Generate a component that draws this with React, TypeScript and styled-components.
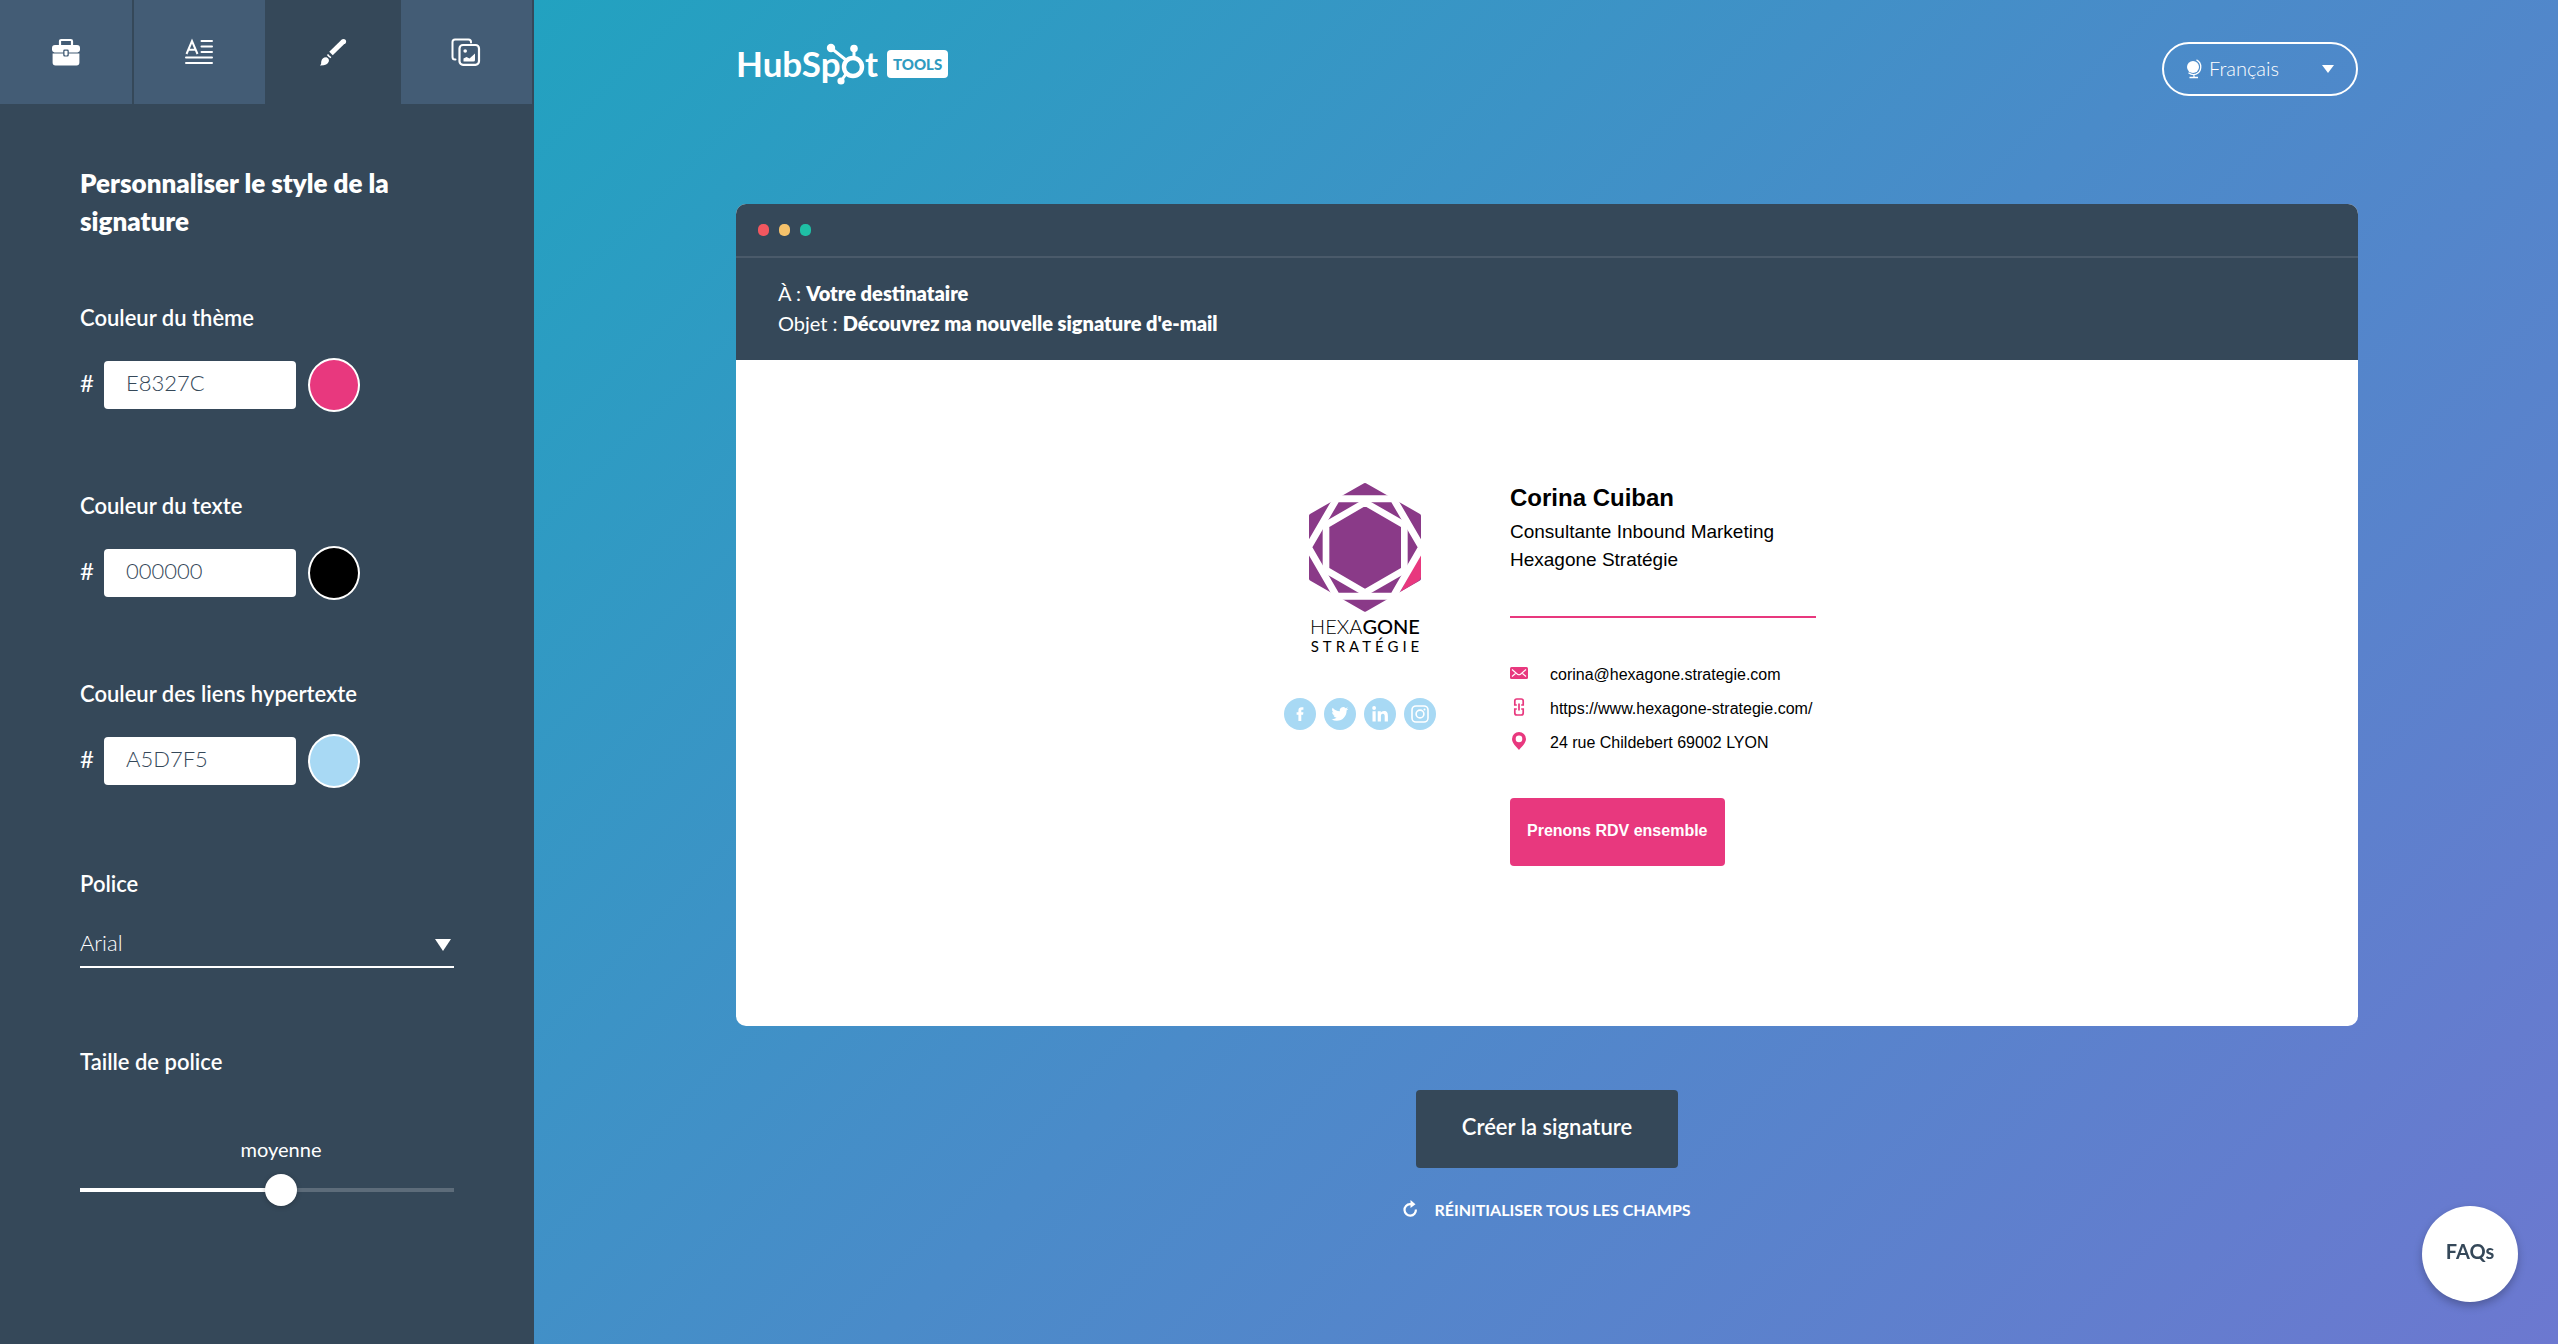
import React, { useState } from 'react';
import styled, { createGlobalStyle } from 'styled-components';

const slate = '#354859';
const slateLight = '#435c75';
const pink = '#e8387e';
const sky = '#a8d9f4';
const purple = '#8a3a88';
const ui = "Lato, 'Open Sans', sans-serif";
const arial = "'Liberation Sans', Arial, sans-serif";

const GlobalStyle = createGlobalStyle`
  *, *::before, *::after { box-sizing: border-box; }
  body { margin: 0; font-family: ${ui}; color: #fff; background: ${slate}; }
  button, input, select { font: inherit; color: inherit; margin: 0; }
  h1, h2, p, ul { margin: 0; padding: 0; }
`;

const Page = styled.div`
  display: flex;
  min-height: 100vh;
`;

const Sidebar = styled.aside`
  flex: 0 0 534px;
  background: ${slate};
`;

const Tabs = styled.nav`
  display: grid;
  grid-template-columns: repeat(4, 1fr);
`;

const Tab = styled.button<{ $active?: boolean }>`
  display: flex;
  align-items: center;
  justify-content: center;
  height: 104px;
  padding: 0;
  border: 0;
  border-right: 2px solid ${slate};
  background: ${(p) => (p.$active ? slate : slateLight)};
  cursor: pointer;
`;

const Panel = styled.form`
  display: flex;
  flex-direction: column;
  gap: 82px;
  padding: 60px 80px;
`;

const PanelTitle = styled.h1`
  margin-bottom: -16px;
  font-size: 26px;
  font-weight: 800;
  line-height: 38px;
`;

const ColorFields = styled.div`
  display: grid;
  gap: 82px;
  padding-bottom: 2px;
`;

const Field = styled.div`
  display: flex;
  flex-direction: column;
  gap: 28px;
`;

const Label = styled.label`
  font-size: 22px;
  font-weight: 600;
  line-height: 24px;
`;

const ColorRow = styled.div`
  display: flex;
  align-items: center;
  gap: 12px;
  height: 54px;
`;

const Hash = styled.span`
  width: 12px;
  padding-bottom: 4px;
  font-size: 24px;
  font-weight: 400;
  line-height: 24px;
`;

const HexInput = styled.input`
  width: 192px;
  height: 48px;
  padding: 0 22px 6px;
  border: 0;
  border-radius: 4px;
  background: #fff;
  color: ${slate};
  font-size: 22px;
  font-weight: 300;
`;

const Swatch = styled.button<{ $color: string }>`
  width: 52px;
  height: 54px;
  padding: 0;
  border: 2px solid #fff;
  border-radius: 50%;
  background: ${(p) => p.$color};
  cursor: pointer;
`;

const SelectBox = styled.div`
  display: grid;
  align-items: center;
  border-bottom: 2px solid #fff;

  > * { grid-area: 1 / 1; }
  > svg { justify-self: end; margin-right: 3px; pointer-events: none; }
`;

const FontSelect = styled.select`
  height: 42px;
  padding: 0 24px 6px 0;
  border: 0;
  appearance: none;
  background: transparent;
  font-size: 22px;
  font-weight: 300;
`;

const SizeField = styled.div`
  display: grid;
`;

const SizeValue = styled.output`
  margin: 63px 0 13px 28px;
  font-size: 20px;
  line-height: 24px;
  text-align: center;
`;

const Slider = styled.input`
  width: 100%;
  height: 32px;
  appearance: none;
  background: linear-gradient(#fff, #fff) 0 50% / var(--fill) 4px no-repeat,
    linear-gradient(#5d6c7a, #5d6c7a) 0 50% / 100% 4px no-repeat;

  &::-webkit-slider-thumb {
    appearance: none;
    width: 32px;
    height: 32px;
    border: 0;
    border-radius: 50%;
    background: #fff;
    box-shadow: 0 1px 5px rgba(0, 0, 0, 0.25);
  }
`;

const Main = styled.main`
  flex: 1;
  display: flex;
  flex-direction: column;
  align-items: center;
  padding: 42px 200px 42px 202px;
  background: linear-gradient(135deg, #22a2c0 0%, #4a8bc9 50%, #6c78d0 100%);
`;

const TopBar = styled.header`
  display: flex;
  justify-content: space-between;
  width: 100%;
  margin-bottom: 108px;
`;

const Brand = styled.a`
  display: flex;
  align-items: flex-start;
  gap: 9px;
  color: inherit;
  text-decoration: none;
`;

const Badge = styled.span`
  margin-top: 8px;
  padding: 0 6px;
  border-radius: 4px;
  background: #fff;
  color: #2f9bc0;
  font-size: 15px;
  font-weight: 900;
  line-height: 28px;
`;

const LanguageBox = styled.div`
  display: grid;
  align-items: center;
  width: 196px;
  height: 54px;
  border: 2px solid #fff;
  border-radius: 27px;

  > * { grid-area: 1 / 1; }
  > svg { pointer-events: none; }
  > svg:first-child { margin-left: 22px; }
  > svg:last-child { justify-self: end; margin-right: 22px; }
`;

const LanguageSelect = styled.select`
  width: 100%;
  height: 50px;
  padding: 0 40px 2px 45px;
  border: 0;
  appearance: none;
  background: transparent;
  font-size: 20px;
  font-weight: 300;
`;

const Mail = styled.section`
  width: 100%;
  border-radius: 10px;
  overflow: hidden;
  background: #fff;
`;

const WindowBar = styled.div`
  display: flex;
  align-items: center;
  gap: 10px;
  height: 54px;
  padding: 0 22px;
  border-bottom: 2px solid #4a5a6a;
  background: ${slate};
`;

const Dot = styled.span<{ $color: string }>`
  width: 11px;
  height: 12px;
  border-radius: 5px;
  background: ${(p) => p.$color};
`;

const MailHead = styled.div`
  height: 102px;
  padding: 20px 42px;
  background: ${slate};
  font-size: 20px;
  line-height: 30px;

  b { font-weight: 800; }
`;

const MailBody = styled.div`
  display: flex;
  justify-content: center;
  gap: 74px;
  padding: 122px 0 160px 6px;
  color: #000;
  font-family: ${arial};
`;

const Identity = styled.div`
  display: flex;
  flex-direction: column;
  width: 152px;
`;

const Company = styled.div`
  display: flex;
  flex-direction: column;
  align-items: center;
  padding-left: 10px;
`;

const CompanyName = styled.div`
  margin-top: 2px;
  font-family: ${ui};
  font-size: 20px;
  font-weight: 300;
  line-height: 24px;

  b { font-weight: 500; }
`;

const CompanySub = styled.div`
  padding-left: 4px;
  font-family: ${ui};
  font-size: 15px;
  line-height: 16px;
  letter-spacing: 4px;
`;

const Socials = styled.ul`
  display: flex;
  gap: 8px;
  margin-top: 44px;
  list-style: none;

  a { display: block; height: 32px; }
`;

const Details = styled.div`
  width: 306px;
`;

const Person = styled.h2`
  padding-bottom: 4px;
  font-size: 24px;
  font-weight: 700;
  line-height: 32px;
`;

const Role = styled.p`
  font-size: 19px;
  line-height: 28px;
`;

const Rule = styled.hr`
  height: 2px;
  margin: 42px 0 40px;
  border: 0;
  background: ${pink};
`;

const Contacts = styled.ul`
  display: grid;
  margin-bottom: 38px;
  list-style: none;
`;

const Contact = styled.li`
  display: grid;
  grid-template-columns: 18px auto;
  align-items: center;
  justify-items: center;
  justify-content: start;
  gap: 22px;
  height: 34px;
  font-size: 16px;
  line-height: 20px;
  white-space: nowrap;

  svg { margin-bottom: 4px; }
  a, span { justify-self: start; color: inherit; text-decoration: none; }
`;

const Cta = styled.a`
  display: inline-block;
  padding: 0 17px 2px;
  border-radius: 4px;
  background: ${pink};
  color: #fff;
  font-size: 16px;
  font-weight: 700;
  line-height: 66px;
  text-decoration: none;
`;

const CreateButton = styled.button`
  margin-top: 64px;
  width: 262px;
  height: 78px;
  padding: 0 0 6px;
  border: 0;
  border-radius: 4px;
  background: ${slate};
  font-size: 22px;
  font-weight: 600;
  cursor: pointer;
`;

const ResetButton = styled.button`
  display: flex;
  align-items: center;
  gap: 16px;
  margin-top: 30px;
  padding: 0;
  border: 0;
  background: none;
  font-size: 16px;
  font-weight: 700;
  line-height: 24px;
  cursor: pointer;

  svg { margin-bottom: 4px; }
`;

const FaqButton = styled.button`
  position: fixed;
  right: 40px;
  bottom: 42px;
  width: 96px;
  height: 96px;
  padding: 0 0 6px;
  border: 0;
  border-radius: 50%;
  background: #fff;
  color: ${slate};
  font-size: 20px;
  font-weight: 700;
  box-shadow: 0 4px 8px rgba(0, 0, 0, 0.25);
  cursor: pointer;
`;

const Caret = ({ width, height }: { width: number; height: number }) => (
  <svg width={width} height={height} viewBox="0 0 16 12" preserveAspectRatio="none" aria-hidden="true">
    <path d="M0 0H16L8 12Z" fill="#fff" />
  </svg>
);

const BriefcaseIcon = () => (
  <svg width="28" height="28" viewBox="0 0 28 28" aria-hidden="true">
    <path d="M8 7V3.2Q8 2 9.200 2H18.800Q20 2 20 3.200V7" fill="none" stroke="#fff" strokeWidth="2.200" />
    <path d="M3 7H25Q28 7 28 10V12Q28 14 25.500 14.400H16.800V13Q16.800 11.600 15.400 11.600H12.600Q11.200 11.600 11.200 13V14.400H2.500Q0 14 0 12V10Q0 7 3 7Z" fill="#fff" />
    <path d="M.6 15.400H11.200V17Q11.200 18.600 12.600 18.600H15.400Q16.800 18.600 16.800 17V15.400H27.400V24.500Q27.400 27.500 24.500 27.500H3.500Q.6 27.500 .6 24.500Z" fill="#fff" />
    <rect x="12.500" y="12.800" width="3" height="4.600" rx=".8" fill="#fff" />
  </svg>
);

const TextIcon = () => (
  <svg width="28" height="28" viewBox="0 0 28 28" aria-hidden="true">
    <path d="M1.500 16L7 3L12.500 16M3.400 11.800H10.600" fill="none" stroke="#fff" strokeWidth="2" />
    <path d="M16.500 3H27M16.500 8.500H27M16.500 14H27M1 19.500H27M1 25H27" stroke="#fff" strokeWidth="2" strokeLinecap="round" />
  </svg>
);

const BrushIcon = () => (
  <svg width="28" height="28" viewBox="0 0 28 28" aria-hidden="true">
    <path d="M12 15.500L24.300 3.500" stroke="#fff" strokeWidth="5" />
    <circle cx="24.500" cy="3.500" r="2.600" fill="#fff" />
    <path d="M8.500 16.500Q10 18.600 12 19.600" fill="none" stroke="#fff" strokeWidth="1.600" />
    <path d="M7.400 19.200Q10.600 20.400 9.800 23.600Q8.400 27.800 1 27.600Q2.600 26 2.200 23.800Q3 19 7.400 19.200Z" fill="#fff" />
  </svg>
);

const GalleryIcon = () => (
  <svg width="30" height="28" viewBox="0 0 30 28" aria-hidden="true">
    <path d="M20 4.500V4Q20 1.500 17.500 1.500H4Q1.500 1.500 1.500 4V19Q1.500 21.500 4 21.500H4.500" fill="none" stroke="#fff" strokeWidth="2" strokeLinecap="round" />
    <rect x="8.500" y="7" width="19.500" height="19.800" rx="3.500" fill="none" stroke="#fff" strokeWidth="2.200" />
    <circle cx="14.200" cy="13" r="1.800" fill="#fff" />
    <path d="M12.500 23.500V20.500L15.500 19L18.500 20.500L24 15.500V22Q24 23.500 22.500 23.500Z" fill="#fff" />
  </svg>
);

const GlobeIcon = () => (
  <svg width="18" height="20" viewBox="0 0 18 20" aria-hidden="true">
    <circle cx="7" cy="8" r="6" fill="#fff" />
    <path d="M10.500 .8A8 8 0 0 1 10 15.200Q6 16.500 2.500 13.800M8 15.500V18M3.500 18.500H12" fill="none" stroke="#fff" strokeWidth="1.300" />
  </svg>
);

const HubSpotLogo = () => (
  <svg width="142" height="46" viewBox="0 0 142 46" role="img" aria-label="HubSpot">
    <g fill="#fff" fontFamily={ui} fontWeight="700" fontSize="35">
      <text x="0" y="35">HubSp</text>
      <text x="129" y="35">t</text>
    </g>
    <g stroke="#fff" fill="none">
      <circle cx="117" cy="25" r="9" strokeWidth="4.400" />
      <path d="M95 6L110 18M118 6V16M105 39L110 32" strokeWidth="3" />
    </g>
    <g fill="#fff">
      <circle cx="95" cy="6" r="4.200" />
      <circle cx="118" cy="6.500" r="3.800" />
      <circle cx="105" cy="39" r="3.600" />
    </g>
  </svg>
);

const HexagonLogo = () => (
  <svg width="114" height="130" viewBox="143 63 342 390" role="img" aria-label="Hexagone Stratégie">
    <path d="M314 72L476 164V353L314 446L152 353V164Z" fill={purple} stroke={purple} strokeWidth="12" strokeLinejoin="round" />
    <path d="M478 284L420 392L474 360Q482 355 482 348V284Z" fill={pink} />
    <path d="M484 259L399 406H229L144 259L229 113H399Z" fill="none" stroke="#fff" strokeWidth="21" />
    <path d="M314 124L432 192V327L314 395L197 327V192Z" fill="none" stroke="#fff" strokeWidth="20" />
  </svg>
);

const FacebookIcon = () => (
  <svg width="32" height="32" viewBox="0 0 32 32" aria-hidden="true">
    <circle cx="16" cy="16" r="16" fill={sky} />
    <path d="M14.400 23V16.800H12.600V14.200H14.400V12.500C14.400 10.300 15.500 9.200 17.600 9.200H19.400V11.800H18.200C17.500 11.800 17.300 12.100 17.300 12.800V14.200H19.400L19.100 16.800H17.300V23Z" fill="#fff" />
  </svg>
);

const TwitterIcon = () => (
  <svg width="32" height="32" viewBox="0 0 32 32" aria-hidden="true">
    <circle cx="16" cy="16" r="16" fill={sky} />
    <path transform="translate(7.500 7.500) scale(.7)" d="M23.950 4.570a10 10 0 0 1-2.820.77 4.960 4.960 0 0 0 2.160-2.720 9.900 9.900 0 0 1-3.130 1.180 4.920 4.920 0 0 0-8.380 4.480A13.930 13.930 0 0 1 1.640 3.160a4.920 4.920 0 0 0 1.520 6.570 4.900 4.900 0 0 1-2.230-.61v.06a4.920 4.920 0 0 0 3.950 4.830 5 5 0 0 1-2.210.08 4.940 4.940 0 0 0 4.600 3.420A9.870 9.870 0 0 1 0 19.540a13.990 13.990 0 0 0 7.550 2.210c9.050 0 14-7.500 14-13.980 0-.21 0-.42-.02-.63a9.940 9.940 0 0 0 2.460-2.550Z" fill="#fff" />
  </svg>
);

const LinkedinIcon = () => (
  <svg width="32" height="32" viewBox="0 0 32 32" aria-hidden="true">
    <circle cx="16" cy="16" r="16" fill={sky} />
    <circle cx="10.100" cy="10" r="1.900" fill="#fff" />
    <path d="M8.500 13.300H11.700V23.600H8.500ZM13.700 13.300H16.800V14.700C17.300 13.800 18.400 13 20 13C23.200 13 23.900 15.100 23.900 17.900V23.600H20.700V18.600C20.700 17.300 20.600 15.800 18.900 15.800S16.900 17.200 16.900 18.500V23.600H13.700Z" fill="#fff" />
  </svg>
);

const InstagramIcon = () => (
  <svg width="32" height="32" viewBox="0 0 32 32" aria-hidden="true">
    <circle cx="16" cy="16" r="16" fill={sky} />
    <g fill="none" stroke="#fff" strokeWidth="1.600">
      <rect x="8" y="8" width="16" height="16" rx="4" />
      <circle cx="16" cy="16" r="3.900" />
    </g>
    <circle cx="20.500" cy="11.500" r="1" fill="#fff" />
  </svg>
);

const MailIcon = () => (
  <svg width="18" height="12" viewBox="0 0 18 12" aria-hidden="true">
    <rect width="18" height="12" rx="1.500" fill={pink} />
    <path d="M2 2.500L7.500 7.200Q9 8.300 10.500 7.200L16 2.500M2 9.500L5.500 6.500M16 9.500L12.500 6.500" fill="none" stroke="#fff" strokeWidth="1.100" />
  </svg>
);

const LinkIcon = () => (
  <svg width="12" height="18" viewBox="0 0 12 18" aria-hidden="true">
    <path d="M3.800 7H1.800V3Q1.800 1 3.800 1H8.200Q10.200 1 10.200 3V7H8.200M8.200 11H10.200V15Q10.200 17 8.200 17H3.800Q1.800 17 1.800 15V11H3.800M6 5.500V12.500" fill="none" stroke={pink} strokeWidth="1.700" />
  </svg>
);

const PinIcon = () => (
  <svg width="14" height="18" viewBox="0 0 14 18" aria-hidden="true">
    <path d="M7 0A7 7 0 0 1 14 7C14 11 9.500 15 7 18C4.500 15 0 11 0 7A7 7 0 0 1 7 0ZM7 3.600A3.300 3.300 0 1 0 7 10.200A3.300 3.300 0 0 0 7 3.600Z" fill={pink} />
  </svg>
);

const ResetIcon = () => (
  <svg width="15" height="17" viewBox="0 0 15 17" aria-hidden="true">
    <path d="M8.500 4.200H7A5.700 5.700 0 1 0 12.900 9.500" fill="none" stroke="#fff" strokeWidth="2.200" />
    <path d="M7.500 0L12.500 4.200L7.500 8Z" fill="#fff" />
  </svg>
);

const colorFields = [
  { id: 'theme', label: 'Couleur du thème', value: 'E8327C', color: pink },
  { id: 'text', label: 'Couleur du texte', value: '000000', color: '#000' },
  { id: 'links', label: 'Couleur des liens hypertexte', value: 'A5D7F5', color: sky },
];

const socials = [
  { name: 'Facebook', icon: <FacebookIcon /> },
  { name: 'Twitter', icon: <TwitterIcon /> },
  { name: 'LinkedIn', icon: <LinkedinIcon /> },
  { name: 'Instagram', icon: <InstagramIcon /> },
];

export default function App() {
  const [size, setSize] = useState(54);

  return (
    <Page>
      <GlobalStyle />
      <Sidebar>
        <Tabs>
          <Tab type="button" aria-label="Modèle"><BriefcaseIcon /></Tab>
          <Tab type="button" aria-label="Texte"><TextIcon /></Tab>
          <Tab type="button" aria-label="Style" $active><BrushIcon /></Tab>
          <Tab type="button" aria-label="Images"><GalleryIcon /></Tab>
        </Tabs>
        <Panel>
          <PanelTitle>Personnaliser le style de la signature</PanelTitle>
          <ColorFields>
            {colorFields.map((f) => (
              <Field key={f.id}>
                <Label htmlFor={f.id}>{f.label}</Label>
                <ColorRow>
                  <Hash>#</Hash>
                  <HexInput id={f.id} defaultValue={f.value} />
                  <Swatch type="button" aria-label={f.label} $color={f.color} />
                </ColorRow>
              </Field>
            ))}
          </ColorFields>
          <Field>
            <Label htmlFor="font">Police</Label>
            <SelectBox>
              <FontSelect id="font"><option>Arial</option></FontSelect>
              <Caret width={16} height={12} />
            </SelectBox>
          </Field>
          <SizeField>
            <Label htmlFor="size">Taille de police</Label>
            <SizeValue htmlFor="size">moyenne</SizeValue>
            <Slider
              id="size"
              type="range"
              value={size}
              onChange={(e) => setSize(Number(e.target.value))}
              style={{ '--fill': `${size}%` } as React.CSSProperties}
            />
          </SizeField>
        </Panel>
      </Sidebar>

      <Main>
        <TopBar>
          <Brand href="#">
            <HubSpotLogo />
            <Badge>TOOLS</Badge>
          </Brand>
          <LanguageBox>
            <GlobeIcon />
            <LanguageSelect aria-label="Langue"><option>Français</option></LanguageSelect>
            <Caret width={12} height={8} />
          </LanguageBox>
        </TopBar>

        <Mail>
          <WindowBar>
            <Dot $color="#f2575f" />
            <Dot $color="#f5c26b" />
            <Dot $color="#1fbfa5" />
          </WindowBar>
          <MailHead>
            <p>À : <b>Votre destinataire</b></p>
            <p>Objet : <b>Découvrez ma nouvelle signature d'e-mail</b></p>
          </MailHead>
          <MailBody>
            <Identity>
              <Company>
                <HexagonLogo />
                <CompanyName>HEXA<b>GONE</b></CompanyName>
                <CompanySub>STRATÉGIE</CompanySub>
              </Company>
              <Socials>
                {socials.map((s) => (
                  <li key={s.name}><a href="#" aria-label={s.name}>{s.icon}</a></li>
                ))}
              </Socials>
            </Identity>
            <Details>
              <Person>Corina Cuiban</Person>
              <Role>Consultante Inbound Marketing</Role>
              <Role>Hexagone Stratégie</Role>
              <Rule />
              <Contacts>
                <Contact><MailIcon /><a href="#">corina@hexagone.strategie.com</a></Contact>
                <Contact><LinkIcon /><a href="#">https://www.hexagone-strategie.com/</a></Contact>
                <Contact><PinIcon /><span>24 rue Childebert 69002 LYON</span></Contact>
              </Contacts>
              <Cta href="#">Prenons RDV ensemble</Cta>
            </Details>
          </MailBody>
        </Mail>

        <CreateButton type="button">Créer la signature</CreateButton>
        <ResetButton type="button"><ResetIcon />RÉINITIALISER TOUS LES CHAMPS</ResetButton>
      </Main>

      <FaqButton type="button">FAQs</FaqButton>
    </Page>
  );
}
